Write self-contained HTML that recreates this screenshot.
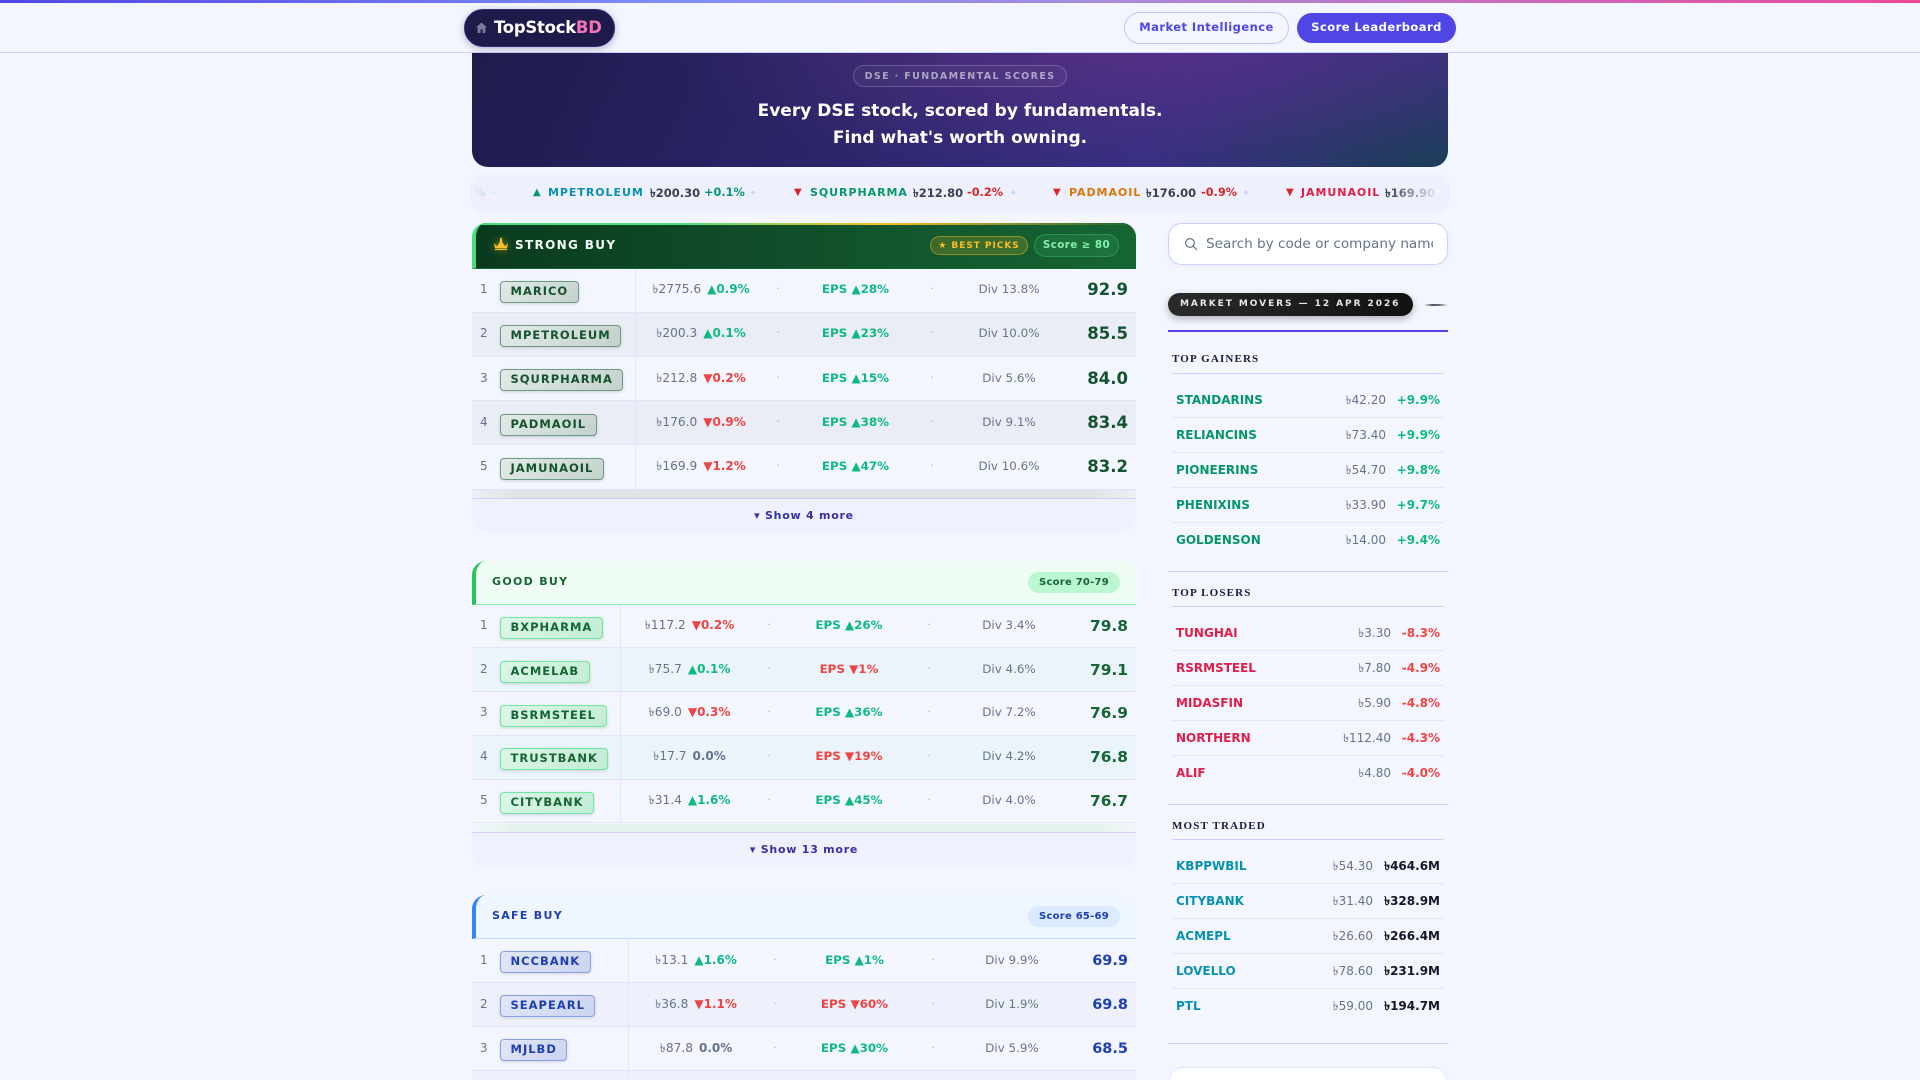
<!DOCTYPE html>
<html><head><meta charset="utf-8"><title>TopStockBD</title>
<style>
*{box-sizing:border-box;margin:0;padding:0}
html,body{width:1920px;height:1080px;overflow:hidden;background:#f4f6ff;font-family:"DejaVu Sans","Liberation Sans",sans-serif}
body{position:relative}
.a{position:absolute;white-space:nowrap}
.c{position:absolute;white-space:nowrap;transform:translateX(-50%);top:50%;margin-top:-10px;line-height:18px}
#bar{left:0;top:0;width:1920px;height:3px;background:linear-gradient(90deg,#4f46e5 0%,#818cf8 35%,#a78bda 58%,#ec4899 100%);z-index:6}
#nav{left:0;top:0;width:1920px;height:53px;background:#f4f6ff;border-bottom:1px solid #c7d2fe;z-index:5}
#logo{left:464px;top:9px;width:151px;height:38px;border-radius:19px;background:#1e1b4b;border:1px solid #312e81;box-shadow:0 2px 8px rgba(30,27,75,.3);z-index:6}
#logot{left:494px;top:17px;font-size:16.4px;font-weight:700;line-height:22px;color:#fff;z-index:7;letter-spacing:-.2px}
#logot b{color:#f472b6}
.btn{border-radius:17px;font-size:11.5px;font-weight:700;letter-spacing:.45px;text-align:center;z-index:6}
#hero{left:472px;top:10px;width:976px;height:157px;border-radius:16px;background:radial-gradient(ellipse 480px 170px at 68% 8%,rgba(115,52,140,.62),rgba(115,52,140,0) 100%),radial-gradient(ellipse 290px 110px at 100% 100%,rgba(28,62,88,.95),rgba(28,62,88,0) 100%),linear-gradient(115deg,#1e1b4b 0%,#2a2568 38%,#312e81 70%,#2d3176 100%)}
#hb{left:853px;top:65px;width:214px;height:22px;border:1px solid rgba(255,255,255,.2);border-radius:11px;background:rgba(255,255,255,.04);color:rgba(255,255,255,.55);font-size:9.5px;font-weight:700;letter-spacing:1.38px;text-align:center;line-height:21px}
.ht{left:472px;width:976px;text-align:center;color:#fff;font-weight:700;font-size:17px;line-height:24px}
#tick{left:472px;top:174px;width:976px;height:37px;border-radius:12px;background:#eef1fd;box-shadow:0 1px 4px rgba(99,102,241,.08);overflow:hidden}
#tick span{position:absolute;top:10px;line-height:18px;font-size:11px;font-weight:700;white-space:nowrap}
#tick .k{letter-spacing:.95px}
#tick .p{color:#374151;font-size:11.5px;font-weight:700}
#tick .g{color:#059669;font-size:11.3px}
#tick .l{color:#dc2626;font-size:11.3px}
#tick .u{color:#c7d2fe;font-size:6px}
#tick .tr{font-size:10px}
#tick i{position:absolute;top:0;height:37px;width:60px}
.sec{left:472px;width:664px}
.hd{position:absolute;left:0;width:664px}
.r{position:absolute;left:0;width:664px;border-bottom:1px solid #e0e5fb;font-size:12px}
.s1{--p:229px;--d1:306px;--e:383.5px;--d2:460px;--v:537px;--sp:163px;--fs:16.5px;--sc:#14532d}
.s2{--p:217.5px;--d1:297px;--e:377px;--d2:457px;--v:537px;--sp:148px;--fs:15.4px;--sc:#166534}
.s3{--p:224px;--d1:303px;--e:382.5px;--d2:461px;--v:540px;--sp:156px;--fs:14.5px;--sc:#1e40af}
.sp{position:absolute;left:var(--sp);top:0;bottom:-1px;width:1px;background:#e0e5fb}
.n{position:absolute;left:8px;top:50%;margin-top:-10px;line-height:18px;color:#64748b;font-size:12px}
.t{position:absolute;left:28px;top:12.4px;height:22px;border-radius:4px;padding:0 9.5px;line-height:19.5px;font-size:11.5px;font-weight:700;letter-spacing:1px;white-space:nowrap;box-shadow:0 1px 3px rgba(0,0,0,.14)}
.s2 .t{top:12.5px}.s3 .t{top:12px}
.s1 .t{background:linear-gradient(135deg,#e2eae8,#c3d2cd);border:1px solid #6d9a84;color:#14532d}
.s2 .t{background:linear-gradient(135deg,#dcf6e7,#c2ecd5);border:1px solid #6ee7a0;color:#166534}
.s3 .t{background:linear-gradient(135deg,#e2e7f8,#cbd3ee);border:1px solid #8c9fe0;color:#1e40af}
.pc{left:var(--p);color:#64748b;font-size:12.2px}
.pc b{margin-left:6px;font-size:12px}
.up{color:#10b981}.dn{color:#ef4444}.fl{color:#64748b}
.dt{color:#94a3b8;font-size:10px;margin-top:-9px}
.d1{left:var(--d1)}.d2{left:var(--d2)}
.ep{left:var(--e);font-weight:700;font-size:11.9px;color:#10b981}
.ep.dn{color:#ef4444}
.dv{left:var(--v);color:#64748b;font-size:11.9px}
.sc{position:absolute;right:8px;top:50%;margin-top:-10px;line-height:20px;font-weight:700;font-size:var(--fs);color:var(--sc)}
.e1{background:#eaedf6}.e2{background:#ecf4fb}.e3{background:#eef1fb}
.fade{position:absolute;left:0;width:664px;height:9px}
.more{position:absolute;left:0;width:664px;height:35px;background:#eff2fe;border-top:1px solid #c7d2fe;border-radius:0 0 14px 14px;text-align:center;color:#3730a3;font-size:11px;font-weight:700;letter-spacing:.75px;line-height:33px}
.pill{position:absolute;height:21px;border-radius:11px;text-align:center;font-size:10px;font-weight:700;letter-spacing:.25px;line-height:21px}
.ttl{position:absolute;font-size:12px;font-weight:700;letter-spacing:1.35px;line-height:16px;top:50%;margin-top:-9px}
.ttl.m{font-size:11px;letter-spacing:1.3px;margin-top:-8.5px}
#sr{left:1168px;top:223px;width:280px;height:42px;background:#fff;border:1.5px solid #c7d2fe;border-radius:14px;box-shadow:0 1px 5px rgba(99,102,241,.08)}
#srt{left:1206px;top:233px;width:227px;overflow:hidden;color:#64748b;font-size:13.6px;line-height:22px}
#mm{left:1168px;top:293px;width:245px;height:23px;border-radius:12px;background:linear-gradient(90deg,#2b2b2b,#111);box-shadow:0 3px 8px rgba(0,0,0,.28);color:#e5e7eb;font-size:9px;font-weight:700;letter-spacing:1.95px;line-height:23px;padding-left:12px}
.ln{left:1168px;width:280px;height:1px;background:#c7d2fe}
.st{left:1172px;font-family:"Liberation Serif",serif;font-weight:700;font-size:11px;letter-spacing:1.15px;color:#1e1b3a;line-height:14px;margin-top:1px}
.sl{left:1172px;width:272px;height:1px;background:#c7d2fe}
.rl{left:1172px;width:272px;height:1px;background:#e0e4fb}
.code{left:1176px;font-size:12px;font-weight:700;line-height:16px}
.pr{color:#64748b;font-size:12px;line-height:16px;text-align:right;width:90px}
.pt{font-size:12px;font-weight:700;line-height:16px;text-align:right;width:90px;left:1350px}
</style></head><body>

<div class="a" id="hero"></div>
<div class="a" id="nav"></div>
<div class="a" id="bar"></div>
<div class="a" id="logo"></div>
<svg class="a" style="left:475px;top:21px;z-index:7" width="13" height="13" viewBox="0 0 13 13"><path d="M6.5 1.5L1 6.5h1.6V12h2.9V8.4h2V12h2.9V6.5H12z" fill="#7c7a99"/></svg>
<div class="a" id="logot">TopStock<b>BD</b></div>
<div class="a btn" style="left:1124px;top:12px;width:165px;height:32px;border:1px solid #c4c2f8;color:#4f46e5;line-height:29px;background:#f4f6ff">Market Intelligence</div>
<div class="a btn" style="left:1297px;top:13px;width:159px;height:30px;background:#4f46e5;color:#fff;line-height:28px">Score Leaderboard</div>

<div class="a" id="hb">DSE · FUNDAMENTAL SCORES</div>
<div class="a ht" style="top:99px">Every DSE stock, scored by fundamentals.</div>
<div class="a ht" style="top:126px">Find what's worth owning.</div>

<div class="a" id="tick">
<span class="g" style="left:2px">%</span><span class="u" style="left:19px">◆</span>
<span class="tr" style="left:61px;color:#059669">▲</span><span class="k" style="left:76px;color:#0891b2">MPETROLEUM</span><span class="p" style="left:178px">৳200.30</span><span class="g" style="left:232px">+0.1%</span><span class="u" style="left:279px">◆</span>
<span class="tr" style="left:322px;color:#dc2626">▼</span><span class="k" style="left:338px;color:#059669">SQURPHARMA</span><span class="p" style="left:441px">৳212.80</span><span class="l" style="left:495px">-0.2%</span><span class="u" style="left:539px">◆</span>
<span class="tr" style="left:581px;color:#dc2626">▼</span><span class="k" style="left:597px;color:#d97706">PADMAOIL</span><span class="p" style="left:674px">৳176.00</span><span class="l" style="left:729px">-0.9%</span><span class="u" style="left:771.5px">◆</span>
<span class="tr" style="left:814px;color:#dc2626">▼</span><span class="k" style="left:829px;color:#e11d48">JAMUNAOIL</span><span class="p" style="left:913px">৳169.90</span><span class="l" style="left:968px">-1.2%</span>
<i style="left:0;background:linear-gradient(90deg,#eef1fd 0%,rgba(238,241,253,0) 100%)"></i>
<i style="right:0;background:linear-gradient(270deg,#eef1fd 15%,rgba(238,241,253,0) 100%)"></i>
</div>

<!-- STRONG BUY -->
<div class="a sec s1" style="top:223px;height:310px">
 <div class="hd" style="top:0;height:46px;border-radius:14px 14px 0 0;border-left:4px solid #4ade80;border-bottom:1px solid #166534;background:linear-gradient(90deg,#0a3a1e 0%,#0f4a27 35%,#166534 100%);overflow:hidden">
  <div style="position:absolute;left:0;top:0;width:100%;height:2px;background:linear-gradient(90deg,#4ade80 0%,#4ade80 30%,#fbbf24 62%,#166534 100%)"></div>
  <div class="ttl" style="left:39px;color:#f0fdf4">STRONG BUY</div>
 </div>
 <svg style="position:absolute;left:14px;top:7px;overflow:visible;filter:drop-shadow(0 0 4px rgba(251,191,36,.55))" width="34" height="34" viewBox="0 0 34 34"><path d="M8 13l3 3.2L13.8 12V9.5h2.4V12L19 16.2 22 13l-1 5H9zM9 18.6h12V20H9z" fill="#fbbf24"/><circle cx="15" cy="8.6" r="1" fill="#fbbf24"/></svg>
 <div class="pill" style="left:458px;top:13px;width:98px;height:19px;background:rgba(251,191,36,.18);border:1px solid rgba(251,191,36,.45);color:#fbbf24;font-size:9px;letter-spacing:.95px;line-height:18px">★ BEST PICKS</div>
 <div class="pill" style="left:562px;top:11px;width:85px;height:23px;background:rgba(74,222,128,.12);border:1px solid rgba(74,222,128,.35);color:#86efac;line-height:20px;border-radius:12px;font-size:10.3px;letter-spacing:.45px">Score ≥ 80</div>

 <div class="r" style="top:45.6px;height:44.2px"><div class="sp"></div><span class="n">1</span><span class="t">MARICO</span><span class="c pc">৳2775.6<b class="up">▲0.9%</b></span><span class="c dt d1">·</span><span class="c ep">EPS ▲28%</span><span class="c dt d2">·</span><span class="c dv">Div 13.8%</span><span class="sc">92.9</span></div>
 <div class="r e1" style="top:89.8px;height:44.2px"><div class="sp"></div><span class="n">2</span><span class="t">MPETROLEUM</span><span class="c pc">৳200.3<b class="up">▲0.1%</b></span><span class="c dt d1">·</span><span class="c ep">EPS ▲23%</span><span class="c dt d2">·</span><span class="c dv">Div 10.0%</span><span class="sc">85.5</span></div>
 <div class="r" style="top:134px;height:44.2px"><div class="sp"></div><span class="n">3</span><span class="t">SQURPHARMA</span><span class="c pc">৳212.8<b class="dn">▼0.2%</b></span><span class="c dt d1">·</span><span class="c ep">EPS ▲15%</span><span class="c dt d2">·</span><span class="c dv">Div 5.6%</span><span class="sc">84.0</span></div>
 <div class="r e1" style="top:178.2px;height:44.2px"><div class="sp"></div><span class="n">4</span><span class="t">PADMAOIL</span><span class="c pc">৳176.0<b class="dn">▼0.9%</b></span><span class="c dt d1">·</span><span class="c ep">EPS ▲38%</span><span class="c dt d2">·</span><span class="c dv">Div 9.1%</span><span class="sc">83.4</span></div>
 <div class="r" style="top:222.4px;height:44.2px"><div class="sp"></div><span class="n">5</span><span class="t">JAMUNAOIL</span><span class="c pc">৳169.9<b class="dn">▼1.2%</b></span><span class="c dt d1">·</span><span class="c ep">EPS ▲47%</span><span class="c dt d2">·</span><span class="c dv">Div 10.6%</span><span class="sc">83.2</span></div>
 <div class="fade" style="top:266.6px;height:8.4px;background:linear-gradient(90deg,#eef0f6,#dfe5e5 6%,#dfe5e5 94%,#eef0f6)"></div>
 <div class="more" style="top:275px">▾ Show 4 more</div>
</div>

<!-- GOOD BUY -->
<div class="a sec s2" style="top:561px;height:306px">
 <div class="hd" style="top:0;height:44px;border-radius:14px 14px 0 0;border-left:4px solid #22c55e;border-bottom:1px solid #86efac;background:#f0fdf4">
  <div class="ttl m" style="left:16px;color:#166534">GOOD BUY</div>
 </div>
 <div class="pill" style="left:556px;top:11px;width:92px;background:#bbf7d0;color:#166534">Score 70-79</div>

 <div class="r" style="top:43.5px;height:43.8px"><div class="sp"></div><span class="n">1</span><span class="t">BXPHARMA</span><span class="c pc">৳117.2<b class="dn">▼0.2%</b></span><span class="c dt d1">·</span><span class="c ep">EPS ▲26%</span><span class="c dt d2">·</span><span class="c dv">Div 3.4%</span><span class="sc">79.8</span></div>
 <div class="r e2" style="top:87.3px;height:43.8px"><div class="sp"></div><span class="n">2</span><span class="t">ACMELAB</span><span class="c pc">৳75.7<b class="up">▲0.1%</b></span><span class="c dt d1">·</span><span class="c ep dn">EPS ▼1%</span><span class="c dt d2">·</span><span class="c dv">Div 4.6%</span><span class="sc">79.1</span></div>
 <div class="r" style="top:131.1px;height:43.8px"><div class="sp"></div><span class="n">3</span><span class="t">BSRMSTEEL</span><span class="c pc">৳69.0<b class="dn">▼0.3%</b></span><span class="c dt d1">·</span><span class="c ep">EPS ▲36%</span><span class="c dt d2">·</span><span class="c dv">Div 7.2%</span><span class="sc">76.9</span></div>
 <div class="r e2" style="top:174.9px;height:43.8px"><div class="sp"></div><span class="n">4</span><span class="t">TRUSTBANK</span><span class="c pc">৳17.7<b class="fl">0.0%</b></span><span class="c dt d1">·</span><span class="c ep dn">EPS ▼19%</span><span class="c dt d2">·</span><span class="c dv">Div 4.2%</span><span class="sc">76.8</span></div>
 <div class="r" style="top:218.7px;height:43.8px"><div class="sp"></div><span class="n">5</span><span class="t">CITYBANK</span><span class="c pc">৳31.4<b class="up">▲1.6%</b></span><span class="c dt d1">·</span><span class="c ep">EPS ▲45%</span><span class="c dt d2">·</span><span class="c dv">Div 4.0%</span><span class="sc">76.7</span></div>
 <div class="fade" style="top:262.5px;height:8.5px;background:linear-gradient(90deg,#f2f6fb,#e6f3ec 6%,#e6f3ec 94%,#f2f6fb)"></div>
 <div class="more" style="top:271px">▾ Show 13 more</div>
</div>

<!-- SAFE BUY -->
<div class="a sec s3" style="top:895px;height:185px;overflow:hidden">
 <div class="hd" style="top:0;height:44px;border-radius:14px 14px 0 0;border-left:4px solid #3b82f6;border-bottom:1px solid #bfdbfe;background:#eff6ff">
  <div class="ttl m" style="left:16px;color:#1e40af">SAFE BUY</div>
 </div>
 <div class="pill" style="left:556px;top:11px;width:92px;background:#dbeafe;color:#1e40af">Score 65-69</div>

 <div class="r" style="top:44px;height:44px"><div class="sp"></div><span class="n">1</span><span class="t">NCCBANK</span><span class="c pc">৳13.1<b class="up">▲1.6%</b></span><span class="c dt d1">·</span><span class="c ep">EPS ▲1%</span><span class="c dt d2">·</span><span class="c dv">Div 9.9%</span><span class="sc">69.9</span></div>
 <div class="r e3" style="top:88px;height:44px"><div class="sp"></div><span class="n">2</span><span class="t">SEAPEARL</span><span class="c pc">৳36.8<b class="dn">▼1.1%</b></span><span class="c dt d1">·</span><span class="c ep dn">EPS ▼60%</span><span class="c dt d2">·</span><span class="c dv">Div 1.9%</span><span class="sc">69.8</span></div>
 <div class="r" style="top:132px;height:44px"><div class="sp"></div><span class="n">3</span><span class="t">MJLBD</span><span class="c pc">৳87.8<b class="fl">0.0%</b></span><span class="c dt d1">·</span><span class="c ep">EPS ▲30%</span><span class="c dt d2">·</span><span class="c dv">Div 5.9%</span><span class="sc">68.5</span></div>
 <div class="r e3" style="top:176px;height:44px"><div class="sp"></div></div>
</div>

<!-- SIDEBAR -->
<div class="a" id="sr"></div>
<svg class="a" style="left:1184px;top:237px" width="14" height="14" viewBox="0 0 14 14" fill="none" stroke="#64748b" stroke-width="1.2"><circle cx="6" cy="6" r="4.4"/><path d="M9.3 9.3L12.6 12.6" stroke-linecap="round"/></svg>
<div class="a" id="srt">Search by code or company name</div>

<div class="a" id="mm">MARKET MOVERS — 12 APR 2026</div>
<div class="a" style="left:1424px;top:304px;width:24px;height:2px;background:linear-gradient(90deg,rgba(60,60,60,0),#555 35%,#666 60%,rgba(100,100,100,0))"></div>
<div class="a" style="left:1168px;top:330px;width:280px;height:2px;background:#4f46e5"></div>

<div class="a st" style="top:351px">TOP GAINERS</div><div class="a sl" style="top:373px"></div>
<div class="a code" style="top:392px;color:#059669">STANDARINS</div><div class="a pr" style="left:1296px;top:392px">৳42.20</div><div class="a pt" style="top:392px;color:#10b981">+9.9%</div><div class="a rl" style="top:417px"></div>
<div class="a code" style="top:427px;color:#059669">RELIANCINS</div><div class="a pr" style="left:1296px;top:427px">৳73.40</div><div class="a pt" style="top:427px;color:#10b981">+9.9%</div><div class="a rl" style="top:452px"></div>
<div class="a code" style="top:462px;color:#059669">PIONEERINS</div><div class="a pr" style="left:1296px;top:462px">৳54.70</div><div class="a pt" style="top:462px;color:#10b981">+9.8%</div><div class="a rl" style="top:487px"></div>
<div class="a code" style="top:497px;color:#059669">PHENIXINS</div><div class="a pr" style="left:1296px;top:497px">৳33.90</div><div class="a pt" style="top:497px;color:#10b981">+9.7%</div><div class="a rl" style="top:522px"></div>
<div class="a code" style="top:532px;color:#059669">GOLDENSON</div><div class="a pr" style="left:1296px;top:532px">৳14.00</div><div class="a pt" style="top:532px;color:#10b981">+9.4%</div>

<div class="a ln" style="top:571px"></div>
<div class="a st" style="top:585px">TOP LOSERS</div><div class="a sl" style="top:606px"></div>
<div class="a code" style="top:625px;color:#e11d48">TUNGHAI</div><div class="a pr" style="left:1301px;top:625px">৳3.30</div><div class="a pt" style="top:625px;color:#ef4444">-8.3%</div><div class="a rl" style="top:650px"></div>
<div class="a code" style="top:660px;color:#e11d48">RSRMSTEEL</div><div class="a pr" style="left:1301px;top:660px">৳7.80</div><div class="a pt" style="top:660px;color:#ef4444">-4.9%</div><div class="a rl" style="top:685px"></div>
<div class="a code" style="top:695px;color:#e11d48">MIDASFIN</div><div class="a pr" style="left:1301px;top:695px">৳5.90</div><div class="a pt" style="top:695px;color:#ef4444">-4.8%</div><div class="a rl" style="top:720px"></div>
<div class="a code" style="top:730px;color:#e11d48">NORTHERN</div><div class="a pr" style="left:1301px;top:730px">৳112.40</div><div class="a pt" style="top:730px;color:#ef4444">-4.3%</div><div class="a rl" style="top:755px"></div>
<div class="a code" style="top:765px;color:#e11d48">ALIF</div><div class="a pr" style="left:1301px;top:765px">৳4.80</div><div class="a pt" style="top:765px;color:#ef4444">-4.0%</div>

<div class="a ln" style="top:804px"></div>
<div class="a st" style="top:818px">MOST TRADED</div><div class="a sl" style="top:839px"></div>
<div class="a code" style="top:858px;color:#0891b2">KBPPWBIL</div><div class="a pr" style="left:1283px;top:858px">৳54.30</div><div class="a pt" style="top:858px;color:#111827">৳464.6M</div><div class="a rl" style="top:883px"></div>
<div class="a code" style="top:893px;color:#0891b2">CITYBANK</div><div class="a pr" style="left:1283px;top:893px">৳31.40</div><div class="a pt" style="top:893px;color:#111827">৳328.9M</div><div class="a rl" style="top:918px"></div>
<div class="a code" style="top:928px;color:#0891b2">ACMEPL</div><div class="a pr" style="left:1283px;top:928px">৳26.60</div><div class="a pt" style="top:928px;color:#111827">৳266.4M</div><div class="a rl" style="top:953px"></div>
<div class="a code" style="top:963px;color:#0891b2">LOVELLO</div><div class="a pr" style="left:1283px;top:963px">৳78.60</div><div class="a pt" style="top:963px;color:#111827">৳231.9M</div><div class="a rl" style="top:988px"></div>
<div class="a code" style="top:998px;color:#0891b2">PTL</div><div class="a pr" style="left:1283px;top:998px">৳59.00</div><div class="a pt" style="top:998px;color:#111827">৳194.7M</div>

<div class="a ln" style="top:1043px"></div>
<div class="a" style="left:1169px;top:1067px;width:278px;height:40px;background:#fff;border:1px solid #e4e8fd;border-radius:14px;box-shadow:0 1px 5px rgba(99,102,241,.08)"></div>
</body></html>
